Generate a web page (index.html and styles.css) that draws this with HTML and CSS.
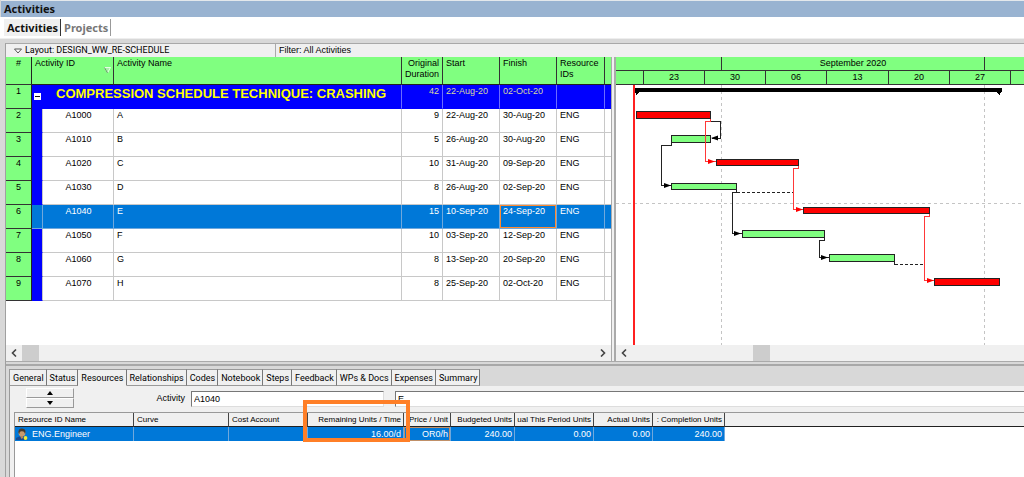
FILE: index.html
```
<!DOCTYPE html>
<html lang="en">
<head>
<meta charset="utf-8">
<title>Activities</title>
<link rel="stylesheet" href="styles.css">
</head>
<body>
<div class="app">
  <header class="titlebar"><h1 class="title">Activities</h1></header>
  <nav class="views">
    <a class="view view-active" href="#activities">Activities</a>
    <a class="view" href="#projects">Projects</a>
  </nav>

  <main class="workspace">
    <div class="layoutbar">
      <button class="layout-button" type="button">
        <svg class="caret" width="8" height="6" viewBox="0 0 8 6"><path d="M0.5 1h7L4 5z" fill="#fff" stroke="#555" stroke-width="1"/></svg>
        Layout: DESIGN_WW_RE-SCHEDULE
      </button>
      <span class="filter">Filter: All Activities</span>
    </div>

    <div class="split">
      <section class="pane">
        <div class="pane-body">
          <table class="activities">
            <colgroup>
              <col class="c-num"><col class="c-band"><col class="c-id"><col class="c-name"><col class="c-dur"><col class="c-date"><col class="c-date"><col class="c-res"><col class="c-rest">
            </colgroup>
            <thead>
              <tr>
                <th class="num">#</th>
                <th colspan="2" class="id-head"><span class="id-label">Activity ID<svg class="sort" width="7" height="7" viewBox="0 0 7 7"><path d="M0.5 0.5h6L3.5 6z" fill="#a8f0a8" stroke="#e4ffe4"/><path d="M0.5 0.5L3.5 6" stroke="#5a9a5a" fill="none"/></svg></span></th>
                <th>Activity Name</th>
                <th class="right">Original Duration</th>
                <th>Start</th>
                <th>Finish</th>
                <th>Resource IDs</th>
                <th></th>
              </tr>
            </thead>
            <tbody>
              <tr class="group">
                <td class="num">1</td>
                <td colspan="3" class="group-cell"><div class="group-title"><button class="toggle" type="button" aria-label="Collapse group"></button><span>COMPRESSION SCHEDULE TECHNIQUE: CRASHING</span></div></td>
                <td class="right">42</td><td>22-Aug-20</td><td>02-Oct-20</td><td></td><td></td>
              </tr>
              <tr><td class="num">2</td><td class="band"></td><td class="id">A1000</td><td>A</td><td class="right">9</td><td>22-Aug-20</td><td>30-Aug-20</td><td>ENG</td><td></td></tr>
              <tr><td class="num">3</td><td class="band"></td><td class="id">A1010</td><td>B</td><td class="right">5</td><td>26-Aug-20</td><td>30-Aug-20</td><td>ENG</td><td></td></tr>
              <tr><td class="num">4</td><td class="band"></td><td class="id">A1020</td><td>C</td><td class="right">10</td><td>31-Aug-20</td><td>09-Sep-20</td><td>ENG</td><td></td></tr>
              <tr><td class="num">5</td><td class="band"></td><td class="id">A1030</td><td>D</td><td class="right">8</td><td>26-Aug-20</td><td>02-Sep-20</td><td>ENG</td><td></td></tr>
              <tr class="selected"><td class="num">6</td><td class="band"></td><td class="id">A1040</td><td>E</td><td class="right">15</td><td>10-Sep-20</td><td class="focus">24-Sep-20</td><td>ENG</td><td></td></tr>
              <tr><td class="num">7</td><td class="band"></td><td class="id">A1050</td><td>F</td><td class="right">10</td><td>03-Sep-20</td><td>12-Sep-20</td><td>ENG</td><td></td></tr>
              <tr><td class="num">8</td><td class="band"></td><td class="id">A1060</td><td>G</td><td class="right">8</td><td>13-Sep-20</td><td>20-Sep-20</td><td>ENG</td><td></td></tr>
              <tr><td class="num">9</td><td class="band"></td><td class="id">A1070</td><td>H</td><td class="right">8</td><td>25-Sep-20</td><td>02-Oct-20</td><td>ENG</td><td></td></tr>
            </tbody>
          </table>
        </div>
        <div class="scrollbar">
          <button class="scroll-button" type="button" aria-label="Scroll left"><svg width="6" height="8" viewBox="0 0 6 8"><path d="M5 0.5L1.5 4L5 7.5" fill="none" stroke="#444" stroke-width="1.6"/></svg></button>
          <div class="track"><div class="thumb"></div></div>
          <button class="scroll-button" type="button" aria-label="Scroll right"><svg width="6" height="8" viewBox="0 0 6 8"><path d="M1 0.5L4.5 4L1 7.5" fill="none" stroke="#444" stroke-width="1.6"/></svg></button>
        </div>
      </section>

      <div class="splitter"></div>

      <section class="gantt">
        <div class="months"><span></span><span>September 2020</span><span></span></div>
        <div class="weeks"><span></span><span>23</span><span>30</span><span>06</span><span>13</span><span>20</span><span>27</span><span></span></div>
        <svg class="chart" width="100%" height="260" role="img" aria-label="Activity bars">
          <g transform="translate(-616 -85)" shape-rendering="crispEdges">
            <g stroke="#c4c4c4" stroke-dasharray="3 3">
              <path d="M721.5 85V345M984.5 85V345M616 203.5H3000" fill="none"/>
            </g>
            <rect x="633" y="85" width="2" height="260" fill="#ff2020"/>
            <path d="M635 88H1002V91L999.5 95L997 92H639L636.5 95L635 92Z" fill="#000"/>
            <g stroke="#222" fill="#80ff80">
              <rect x="671.5" y="135.5" width="39" height="7"/>
              <rect x="671.5" y="183.5" width="65" height="6"/>
              <rect x="742.5" y="230.5" width="82" height="7"/>
              <rect x="829.5" y="254.5" width="65" height="7"/>
            </g>
            <g stroke="#222" fill="#ff0000">
              <rect x="636.5" y="111.5" width="74" height="7"/>
              <rect x="716.5" y="159.5" width="82" height="6"/>
              <rect x="803.5" y="207.5" width="126" height="6"/>
              <rect x="934.5" y="278.5" width="65" height="7"/>
            </g>
            <g stroke="#222" fill="none">
              <path d="M711 121.5H720.5V138.5H712"/>
              <path d="M671.5 143V145.5H661.5V185.5H671"/>
              <path d="M736.5 190V192.5H732.5V233.5H742"/>
              <path d="M824.5 238V240.5H819.5V257.5H829"/>
              <path d="M894.5 262V264.5"/>
              <path d="M737 192.5H793M895 264.5H924" stroke-dasharray="3 2"/>
            </g>
            <g stroke="#ff3838" fill="none">
              <path d="M710.5 119V121.5H705.5V161.5H716"/>
              <path d="M798.5 166V168.5H793.5V209.5H803"/>
              <path d="M929.5 214V216.5H924.5V280.5H934"/>
            </g>
            <g shape-rendering="auto">
              <path d="M711 138L718 135.5V140.5ZM671 185.5L664 183V188ZM741 233.5L734 231V236ZM828 257.5L821 255V260Z" fill="#000"/>
              <path d="M715 161.5L708 159V164ZM803 209.5L796 207V212ZM934 280.5L927 278V283Z" fill="#ff0000"/>
            </g>
          </g>
        </svg>
        <div class="scrollbar">
          <button class="scroll-button" type="button" aria-label="Scroll timeline left"><svg width="6" height="8" viewBox="0 0 6 8"><path d="M5 0.5L1.5 4L5 7.5" fill="none" stroke="#444" stroke-width="1.6"/></svg></button>
          <div class="track track-offset"><div class="thumb"></div></div>
        </div>
      </section>
    </div>

    <section class="details">
      <div class="tabs" role="tablist">
        <button class="tab" type="button" role="tab">General</button>
        <button class="tab" type="button" role="tab">Status</button>
        <button class="tab tab-active" type="button" role="tab" aria-selected="true">Resources</button>
        <button class="tab" type="button" role="tab">Relationships</button>
        <button class="tab" type="button" role="tab">Codes</button>
        <button class="tab" type="button" role="tab">Notebook</button>
        <button class="tab" type="button" role="tab">Steps</button>
        <button class="tab" type="button" role="tab">Feedback</button>
        <button class="tab" type="button" role="tab">WPs &amp; Docs</button>
        <button class="tab" type="button" role="tab">Expenses</button>
        <button class="tab" type="button" role="tab">Summary</button>
      </div>
      <div class="page">
        <div class="record">
          <div class="spin">
            <button class="spin-button" type="button" aria-label="Previous activity"><svg width="6" height="4" viewBox="0 0 6 4"><path d="M0 4L3 0L6 4z"/></svg></button>
            <button class="spin-button" type="button" aria-label="Next activity"><svg width="6" height="4" viewBox="0 0 6 4"><path d="M0 0L3 4L6 0z"/></svg></button>
          </div>
          <label class="record-label" for="activity-id">Activity</label>
          <input class="field field-id" id="activity-id" type="text" value="A1040">
          <input class="field field-name" type="text" value="E" aria-label="Activity name">
        </div>
        <div class="grid-box">
          <table class="resources">
            <colgroup><col class="r-name"><col class="r-curve"><col class="r-cost"><col class="r-rem"><col class="r-price"><col class="r-budget"><col class="r-period"><col class="r-actual"><col class="r-comp"><col></colgroup>
            <thead>
              <tr>
                <th>Resource ID Name</th><th>Curve</th><th>Cost Account</th>
                <th class="right marked">Remaining Units / Time<span class="marker"></span></th>
                <th class="right">Price / Unit</th><th class="right">Budgeted Units</th>
                <th class="right">ual This Period Units</th>
                <th class="right">Actual Units</th>
                <th class="right">: Completion Units</th><th></th>
              </tr>
            </thead>
            <tbody>
              <tr>
                <td><span class="resource"><svg width="12" height="12" viewBox="0 0 12 12"><path d="M0 12V10L3 8.5H8L11 11V12z" fill="#174a92"/><circle cx="6" cy="5" r="3.4" fill="#c99a6c"/><path d="M2.5 5C2 1 5 0 7 0.8C10 1.5 9.8 4 9 6C8.5 3.5 7 3 5.5 3.2C4 3.5 3.5 4 3.5 6z" fill="#493a2c"/><path d="M4 8H7V10L5.5 11z" fill="#b88458"/><circle cx="9.5" cy="10" r="1.9" fill="#f5ee35"/></svg>ENG.Engineer</span></td>
                <td></td><td></td><td class="right">16.00/d</td><td class="right price">OR0/h</td><td class="right">240.00</td><td class="right">0.00</td><td class="right">0.00</td><td class="right">240.00</td><td class="blank"></td>
              </tr>
            </tbody>
          </table>
        </div>
      </div>
    </section>
  </main>
</div>
</body>
</html>
```
FILE: styles.css
```
* { box-sizing: border-box; }

body {
  margin: 0;
  background: #d8d8d8;
  color: #000;
  font: 9px/11px "Liberation Sans", Arial, sans-serif;
}

button, input { font: inherit; color: inherit; margin: 0; border-radius: 0; }

.app { display: flex; flex-direction: column; min-height: 100vh; }

.titlebar {
  height: 17px;
  margin-left: 1px;
  border-top: 1px solid #e4e8ec;
  background: #99b3d1;
}
.title {
  margin: 0;
  padding-left: 3px;
  font: bold 11px/16px "Noto Sans", "Open Sans", sans-serif;
  color: #111;
}

.views {
  display: flex;
  height: 22px;
  padding: 2px 0 2px 4px;
  background: #fff;
  border-bottom: 1px solid #eee;
}
.view {
  padding: 0 2px 0 3px;
  border-right: 1px solid #999;
  color: #777;
  font: bold 11px/17px "Noto Sans", "Open Sans", sans-serif;
  text-decoration: none;
}
.view-active { background: #f0f0f0; color: #111; border-right-color: #333; }

.workspace {
  display: flex;
  flex: 1;
  flex-direction: column;
  margin: 4px 0 0 5px;
  border-left: 1px solid #a0a0a0;
  border-top: 1px solid #a8a8a8;
}

.layoutbar {
  display: flex;
  height: 13px;
  background: #f0f0f0;
  font-family: Roboto, "Liberation Sans", sans-serif;
}
.layout-button {
  display: flex;
  align-items: center;
  gap: 3px;
  width: 270px;
  padding: 0 0 0 8px;
  border: 0;
  border-right: 1px solid #aaa;
  background: none;
}
.filter { padding: 1px 3px; font-family: "Liberation Sans", Arial, sans-serif; }

.split {
  display: grid;
  grid-template-columns: 605px 5px 1fr;
  border-bottom: 1px solid #aaa;
}
.pane { display: flex; flex-direction: column; min-width: 0; background: #fff; }
.pane-body { flex: 1; }
.splitter {
  border: solid #aaa;
  border-width: 0 2px 0 1px;
  background: #f0f0f0;
}

.activities { width: 100%; border-collapse: separate; border-spacing: 0; table-layout: fixed; }
.c-num { width: 26px; }
.c-band { width: 11px; }
.c-id { width: 71px; }
.c-name { width: 288px; }
.c-dur { width: 41px; }
.c-date { width: 57px; }
.c-res { width: 48px; }

.activities th {
  height: 28px;
  padding: 1px 2px 0 3px;
  border-right: 1px solid #333;
  border-bottom: 1px solid #222;
  background: #80ff80;
  font-weight: normal;
  text-align: left;
  vertical-align: top;
}
.activities td {
  height: 24px;
  padding: 1px 2px 0 3px;
  border-right: 1px solid #c8c8c8;
  border-bottom: 1px solid #c8c8c8;
  vertical-align: top;
}
.activities .right { padding-right: 3px; text-align: right; }
.activities .num {
  padding: 1px 0 0;
  border-right: 1px solid #222;
  border-bottom: 1px solid #333;
  background: #80ff80;
  text-align: center;
}
.activities th:last-child, .activities td:last-child { border-right: 0; }
.activities .band { border-bottom-color: #0000ff; background: #0000ff; }
.activities .id { text-align: center; }
.id-label { display: flex; justify-content: space-between; align-items: flex-start; }
.sort { margin-top: 9px; }

.activities .group td:not(.num) {
  border-bottom-color: #0000ff;
  background: #0000ff;
  border-right-color: #6c6cff;
  color: #d8d8a0;
}
.activities .group .group-cell { padding-left: 2px; border-right-color: #6c6cff; }
.group-title {
  display: flex;
  gap: 15px;
  color: #ffff00;
  font: bold 13px/15px "Liberation Sans", Arial, sans-serif;
}
.toggle {
  width: 7px;
  height: 7px;
  margin-top: 7px;
  padding: 0;
  border: 0;
  background: linear-gradient(#111, #111) center / 5px 1px no-repeat #fff;
}

.activities .selected td:not(.num) {
  border-right-color: #70a8dc;
  border-bottom-color: #70a8dc;
  background: #0078d8;
  color: #fff;
}
.activities .selected .focus { box-shadow: inset 0 0 0 1px #ff8a30; }

.scrollbar { display: flex; height: 16px; background: #f0f0f0; }
.scroll-button {
  display: flex;
  align-items: center;
  justify-content: center;
  width: 16px;
  padding: 0;
  border: 0;
  background: none;
}
.track { flex: 1; display: flex; }
.track-offset { padding-left: 121px; }
.thumb { width: 17px; background: #cdcdcd; }

.gantt { min-width: 0; overflow: hidden; background: #fff; }
.months, .weeks {
  display: grid;
  height: 14px;
  background: #80ff80;
  line-height: 13px;
  text-align: center;
}
.months { grid-template-columns: 106px 263px 1fr; }
.weeks { grid-template-columns: 28px repeat(3, 61px) 62px 61px 61px 1fr; }
.months span, .weeks span { border-right: 1px solid #333; border-bottom: 1px solid #333; }
.months span:last-child, .weeks span:last-child { border-right: 0; }
.chart { display: block; }

.details {
  display: flex;
  flex: 1;
  flex-direction: column;
  margin-top: 2px;
  padding: 3px 0 0 3px;
  border-top: 2px solid #a8a8a8;
}
.tabs { display: flex; font-family: Roboto, "Liberation Sans", sans-serif; }
.tab {
  height: 17px;
  padding: 1px 2px 0 3px;
  border: 1px solid #999;
  border-left-width: 0;
  border-right-color: #777;
  background: #f0f0f0;
}
.tab:first-child { border-left-width: 1px; }
.tab-active { border-bottom-color: #f0f0f0; }

.page {
  display: flex;
  flex: 1;
  flex-direction: column;
  border-left: 1px solid #999;
  background: #f0f0f0;
}
.record { display: flex; height: 26px; padding: 2px 0 4px 16px; }
.spin { display: flex; flex-direction: column; width: 48px; }
.spin-button {
  display: flex;
  flex: 1;
  align-items: center;
  justify-content: center;
  padding: 0;
  border: 1px solid #fff;
  border-right-color: #999;
  border-bottom-color: #999;
  background: #f0f0f0;
}
.record-label { width: 117px; padding: 5px 6px 0 0; text-align: right; }
.field {
  height: 16px;
  margin-top: 3px;
  padding: 0 2px;
  border: 1px solid #ddd;
  border-top-color: #777;
  border-left-color: #777;
  background: #fff;
}
.field-id { width: 193px; }
.field-name { flex: 1; min-width: 0; margin-left: 11px; border-right: 0; }

.grid-box {
  flex: 1;
  margin-left: 4px;
  border-left: 1px solid #999;
  border-top: 1px solid #999;
  background: #fff;
}
.resources { width: 100%; border-collapse: separate; border-spacing: 0; table-layout: fixed; }
.r-name { width: 119px; }
.r-curve { width: 95px; }
.r-cost { width: 79px; }
.r-rem { width: 96px; }
.r-price { width: 47px; }
.r-budget { width: 64px; }
.r-period { width: 79px; }
.r-actual { width: 59px; }
.r-comp { width: 72px; }
.resources th, .resources td { height: 14px; padding: 0 3px; border-right: 1px solid #444; text-align: left; white-space: nowrap; }
.resources th {
  border-bottom: 1px solid #222;
  background: #f0f0f0;
  font-size: 8px;
  font-weight: normal;
}
.resources td { border-color: #70a8dc; background: #0078d8; color: #fff; }
.resources .blank { background: #fff; }
.resources th:last-child, .resources td:last-child { border-right: 0; }
.resources .right { padding: 0 2px; text-align: right; }
.resources .price { box-shadow: inset 0 0 0 1px #c09068; }
.resource { display: flex; align-items: center; gap: 4px; margin-left: -2px; }

.marked { position: relative; }
.marker {
  position: absolute;
  z-index: 1;
  inset: -13px -7px -16px -5px;
  border: 4px solid #ff7f27;
}
```
